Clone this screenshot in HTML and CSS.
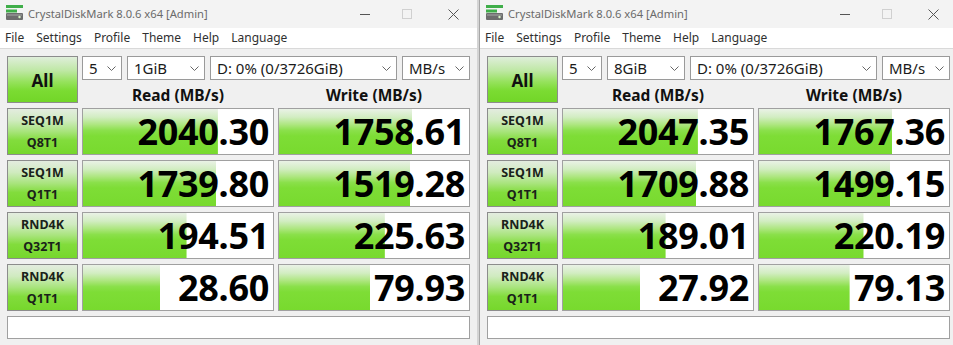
FILE: index.html
```html
<!DOCTYPE html>
<html lang="en">
<head>
<meta charset="utf-8">
<title>CrystalDiskMark</title>
<link rel="stylesheet" href="styles.css">
</head>
<body>
<div class="desktop">

  <div class="window">
    <div class="titlebar">
      <svg class="app-icon" width="17" height="15" viewBox="0 0 17 15">
        <rect x="0" y="0" width="17" height="3" fill="#3fae49"/>
        <rect x="0" y="4.5" width="11" height="3" fill="#3fae49"/>
        <rect x="0" y="8" width="17" height="7" rx="1" fill="#6d6d6d"/>
        <rect x="1" y="9" width="15" height="2" fill="#8a8a8a"/>
        <circle cx="13.5" cy="12" r="1.2" fill="#d8f5c8"/>
      </svg>
      <span class="title">CrystalDiskMark 8.0.6 x64 [Admin]</span>
      <div class="controls">
        <span class="ctl ctl-min"><svg width="10" height="10" viewBox="0 0 10 10"><path d="M0 5.5H10" stroke="#555" stroke-width="1"/></svg></span>
        <span class="ctl ctl-max"><svg width="10" height="10" viewBox="0 0 10 10"><rect x="0.5" y="0.5" width="9" height="9" fill="none" stroke="#d0d0d0" stroke-width="1"/></svg></span>
        <span class="ctl ctl-close"><svg width="11" height="11" viewBox="0 0 11 11"><path d="M0.5 0.5L10.5 10.5M10.5 0.5L0.5 10.5" stroke="#555" stroke-width="1"/></svg></span>
      </div>
    </div>
    <div class="menubar">
      <span>File</span><span>Settings</span><span>Profile</span><span>Theme</span><span>Help</span><span>Language</span>
    </div>
    <div class="client">
      <div class="grid">
        <div class="btn-all">All</div>
        <div class="top">
          <div class="selects">
            <div class="select s-count">5<svg class="chev" width="9" height="5" viewBox="0 0 9 5"><path d="M0.5 0.5L4.5 4.5L8.5 0.5" fill="none" stroke="#666"/></svg></div>
            <div class="select s-size">1GiB<svg class="chev" width="9" height="5" viewBox="0 0 9 5"><path d="M0.5 0.5L4.5 4.5L8.5 0.5" fill="none" stroke="#666"/></svg></div>
            <div class="select s-drive">D: 0% (0/3726GiB)<svg class="chev" width="9" height="5" viewBox="0 0 9 5"><path d="M0.5 0.5L4.5 4.5L8.5 0.5" fill="none" stroke="#666"/></svg></div>
            <div class="select s-unit">MB/s<svg class="chev" width="9" height="5" viewBox="0 0 9 5"><path d="M0.5 0.5L4.5 4.5L8.5 0.5" fill="none" stroke="#666"/></svg></div>
          </div>
          <div class="heads"><div>Read (MB/s)</div><div>Write (MB/s)</div></div>
        </div>

        <div class="label">SEQ1M<br>Q8T1</div>
        <div class="meter" style="--w:71%">2040.30</div>
        <div class="meter" style="--w:70%">1758.61</div>

        <div class="label">SEQ1M<br>Q1T1</div>
        <div class="meter" style="--w:70%">1739.80</div>
        <div class="meter" style="--w:69%">1519.28</div>

        <div class="label">RND4K<br>Q32T1</div>
        <div class="meter" style="--w:54.5%">194.51</div>
        <div class="meter" style="--w:55.7%">225.63</div>

        <div class="label">RND4K<br>Q1T1</div>
        <div class="meter" style="--w:40.6%">28.60</div>
        <div class="meter" style="--w:48%">79.93</div>

        <div class="comment"></div>
      </div>
    </div>
  </div>

  <div class="divider"></div>

  <div class="window">
    <div class="titlebar">
      <svg class="app-icon" width="17" height="15" viewBox="0 0 17 15">
        <rect x="0" y="0" width="17" height="3" fill="#3fae49"/>
        <rect x="0" y="4.5" width="11" height="3" fill="#3fae49"/>
        <rect x="0" y="8" width="17" height="7" rx="1" fill="#6d6d6d"/>
        <rect x="1" y="9" width="15" height="2" fill="#8a8a8a"/>
        <circle cx="13.5" cy="12" r="1.2" fill="#d8f5c8"/>
      </svg>
      <span class="title">CrystalDiskMark 8.0.6 x64 [Admin]</span>
      <div class="controls">
        <span class="ctl ctl-min"><svg width="10" height="10" viewBox="0 0 10 10"><path d="M0 5.5H10" stroke="#555" stroke-width="1"/></svg></span>
        <span class="ctl ctl-max"><svg width="10" height="10" viewBox="0 0 10 10"><rect x="0.5" y="0.5" width="9" height="9" fill="none" stroke="#d0d0d0" stroke-width="1"/></svg></span>
        <span class="ctl ctl-close"><svg width="11" height="11" viewBox="0 0 11 11"><path d="M0.5 0.5L10.5 10.5M10.5 0.5L0.5 10.5" stroke="#555" stroke-width="1"/></svg></span>
      </div>
    </div>
    <div class="menubar">
      <span>File</span><span>Settings</span><span>Profile</span><span>Theme</span><span>Help</span><span>Language</span>
    </div>
    <div class="client">
      <div class="grid">
        <div class="btn-all">All</div>
        <div class="top">
          <div class="selects">
            <div class="select s-count">5<svg class="chev" width="9" height="5" viewBox="0 0 9 5"><path d="M0.5 0.5L4.5 4.5L8.5 0.5" fill="none" stroke="#666"/></svg></div>
            <div class="select s-size">8GiB<svg class="chev" width="9" height="5" viewBox="0 0 9 5"><path d="M0.5 0.5L4.5 4.5L8.5 0.5" fill="none" stroke="#666"/></svg></div>
            <div class="select s-drive">D: 0% (0/3726GiB)<svg class="chev" width="9" height="5" viewBox="0 0 9 5"><path d="M0.5 0.5L4.5 4.5L8.5 0.5" fill="none" stroke="#666"/></svg></div>
            <div class="select s-unit">MB/s<svg class="chev" width="9" height="5" viewBox="0 0 9 5"><path d="M0.5 0.5L4.5 4.5L8.5 0.5" fill="none" stroke="#666"/></svg></div>
          </div>
          <div class="heads"><div>Read (MB/s)</div><div>Write (MB/s)</div></div>
        </div>

        <div class="label">SEQ1M<br>Q8T1</div>
        <div class="meter" style="--w:71%">2047.35</div>
        <div class="meter" style="--w:70%">1767.36</div>

        <div class="label">SEQ1M<br>Q1T1</div>
        <div class="meter" style="--w:70%">1709.88</div>
        <div class="meter" style="--w:69%">1499.15</div>

        <div class="label">RND4K<br>Q32T1</div>
        <div class="meter" style="--w:54%">189.01</div>
        <div class="meter" style="--w:55%">220.19</div>

        <div class="label">RND4K<br>Q1T1</div>
        <div class="meter" style="--w:40.6%">27.92</div>
        <div class="meter" style="--w:47.7%">79.13</div>

        <div class="comment"></div>
      </div>
    </div>
  </div>

</div>
</body>
</html>
```

FILE: styles.css
```css
* { box-sizing: border-box; }

html, body {
  margin: 0;
  padding: 0;
  width: 953px;
  height: 345px;
  overflow: hidden;
  background: #f0f0f0;
}

body {
  font-family: "Noto Sans", "Open Sans", sans-serif;
  color: #1a1a1a;
}

.desktop {
  display: flex;
  width: 953px;
  height: 345px;
  overflow: hidden;
}

.window {
  flex: 0 0 477px;
  width: 477px;
  height: 345px;
  display: flex;
  flex-direction: column;
  background: #f0f0f0;
}

.divider {
  flex: 0 0 3px;
  background: #d4d4d4;
  border-right: 1px solid #a6a6a6;
}

/* title bar */
.titlebar {
  height: 28px;
  flex: 0 0 28px;
  display: flex;
  align-items: center;
  background: #f3f3f3;
  padding-left: 6px;
}

.app-icon {
  flex: 0 0 auto;
  margin-top: -3px;
}

.title {
  margin-left: 5px;
  font-size: 11.2px;
  color: #6a6a6a;
  white-space: nowrap;
  padding-bottom: 2px;
}

.controls {
  margin-left: auto;
  display: flex;
  height: 28px;
}

.ctl {
  display: flex;
  align-items: center;
  justify-content: center;
  height: 28px;
}

.ctl-min { width: 38px; }
.ctl-max { width: 46px; }
.ctl-close { width: 47px; }

/* menu */
.menubar {
  height: 21px;
  flex: 0 0 21px;
  background: #ffffff;
  border-bottom: 1px solid #d9d9d9;
  display: flex;
  gap: 12px;
  padding-left: 5px;
  font-size: 12px;
  line-height: 20px;
  color: #303030;
}

/* client */
.client {
  padding: 7px 6px 0 7px;
}

.grid {
  display: grid;
  grid-template-columns: 71px 192px 192px;
  grid-template-rows: 47px 47px 47px 47px 47px 23px;
  column-gap: 4px;
  row-gap: 5px;
}

.btn-all {
  border: 1px solid #8c8c8c;
  background: linear-gradient(to bottom, #dfeeda 0%, #bfe8a5 30%, #96e25d 55%, #7bdb32 75%, #72d628 100%);
  display: flex;
  align-items: center;
  justify-content: center;
  font-weight: 700;
  font-size: 17px;
  color: #111;
  padding-top: 1px;
}

.top {
  grid-column: 2 / span 2;
  display: flex;
  flex-direction: column;
}

.selects {
  display: flex;
  gap: 5px;
  height: 24px;
}

.select {
  height: 24px;
  background: #ffffff;
  border: 1px solid #9a9a9a;
  display: flex;
  align-items: center;
  padding-left: 6px;
  font-size: 15px;
  color: #1a1a1a;
  white-space: nowrap;
}

.select .chev {
  margin-left: auto;
  margin-right: 5px;
  margin-top: 1px;
}

.s-count { width: 40px; }
.s-size { width: 78px; }
.s-drive { width: 187px; }
.s-unit { width: 68px; }

.heads {
  flex: 1;
  display: grid;
  grid-template-columns: 192px 192px;
  column-gap: 4px;
  align-items: end;
}

.heads div {
  text-align: center;
  font-weight: 700;
  font-size: 15.5px;
  line-height: 16px;
  color: #111;
}

.label {
  border: 1px solid #8c8c8c;
  background: linear-gradient(to bottom, #e3ecdf 0%, #d0ebc0 25%, #a8e47c 50%, #82dc3c 70%, #76d72c 100%);
  display: flex;
  align-items: center;
  justify-content: center;
  text-align: center;
  font-weight: 700;
  font-size: 12.5px;
  line-height: 22px;
  color: #1a221a;
}

.meter {
  border: 1px solid #a0a0a0;
  background-color: #ffffff;
  background-image: linear-gradient(to bottom, #eaf2e6 0%, #d2edc2 18%, #ade67f 35%, #8ae04a 48%, #7edd36 60%, #78da2e 100%);
  background-size: var(--w) 100%;
  background-repeat: no-repeat;
  text-align: right;
  padding-right: 4px;
  font-weight: 700;
  font-size: 36px;
  line-height: 45px;
  color: #000;
  letter-spacing: -0.3px;
}

.comment {
  grid-column: 1 / span 3;
  background: #ffffff;
  border: 1px solid #a0a0a0;
}
```
